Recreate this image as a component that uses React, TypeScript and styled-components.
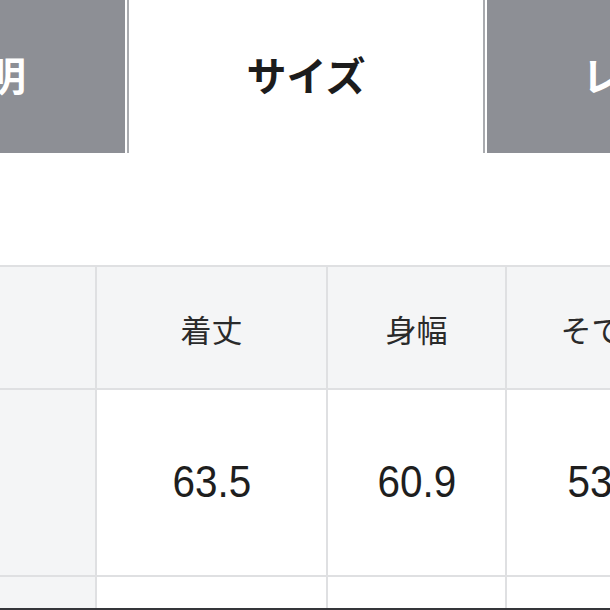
import React from "react";
import styled, { createGlobalStyle } from "styled-components";

const Global = createGlobalStyle`
  html, body { margin: 0; padding: 0; background: #ffffff; }
  body { font-family: "Noto Sans CJK JP", "Noto Sans", sans-serif; }
`;

const Page = styled.div`
  width: 610px;
  height: 610px;
  overflow: hidden;
  box-sizing: border-box;
  border-bottom: 2px solid #35363a;
  background: #ffffff;
`;

const TabBar = styled.div`
  display: flex;
  height: 153px;
  margin-left: -153px;
  width: max-content;
`;

const Tab = styled.div<{ $active?: boolean; $width: number; $side?: "left" | "right" }>`
  width: ${(p) => p.$width}px;
  height: 153px;
  box-sizing: border-box;
  display: flex;
  align-items: center;
  justify-content: center;
  padding-bottom: 6px;
  font-family: "Noto Sans CJK JP", sans-serif;
  font-weight: 700;
  font-size: 40px;
  color: ${(p) => (p.$active ? "#1c1c1c" : "#ffffff")};
  background: ${(p) => (p.$active ? "#ffffff" : "#8d8f95")};
  ${(p) =>
    p.$side === "left"
      ? "box-shadow: 2px 0 0 #ffffff, 4px 0 0 #a9abaf; margin-right: 4px;"
      : ""}
  ${(p) =>
    p.$side === "right"
      ? "box-shadow: -2px 0 0 #ffffff, -4px 0 0 #a9abaf; margin-left: 4px;"
      : ""}
`;

const Grid = styled.div`
  margin-top: 112px;
  margin-left: -100px;
  width: max-content;
  display: grid;
  grid-template-columns: 195px 229px 177px 200px;
  grid-template-rows: 121px 185px 60px;
  gap: 2px;
  padding-top: 2px;
  background: #dfe0e2;
`;

const Cell = styled.div<{ $head?: boolean; $label?: boolean }>`
  display: flex;
  align-items: center;
  justify-content: center;
  background: ${(p) => (p.$head || p.$label ? "#f4f5f6" : "#ffffff")};
  color: #222222;
`;

const HeadText = styled.span`
  font-family: "Noto Sans CJK JP", sans-serif;
  font-size: 31px;
  font-weight: 400;
  color: #2a2a2a;
  margin-top: 1px;
`;

const NumText = styled.span`
  font-family: "Liberation Sans", Arial, sans-serif;
  font-size: 44px;
  font-weight: 400;
  color: #1e1e1e;
  transform: scaleX(0.92);
  margin-bottom: 2px;
`;

const headers = ["", "着丈", "身幅", "そで丈"];
const values = ["63.5", "60.9", "53.0"];

export default function App() {
  return (
    <>
      <Global />
      <Page>
        <TabBar>
          <Tab $width={278} $side="left">説明</Tab>
          <Tab $width={354} $active>サイズ</Tab>
          <Tab $width={350} $side="right">レビュー</Tab>
        </TabBar>
        <Grid>
          {headers.map((h, i) => (
            <Cell key={"h" + i} $head>
              {h && <HeadText>{h}</HeadText>}
            </Cell>
          ))}
          <Cell $label />
          {values.map((v, i) => (
            <Cell key={"v" + i}>
              <NumText>{v}</NumText>
            </Cell>
          ))}
          <Cell $label />
          <Cell />
          <Cell />
          <Cell />
        </Grid>
      </Page>
    </>
  );
}
